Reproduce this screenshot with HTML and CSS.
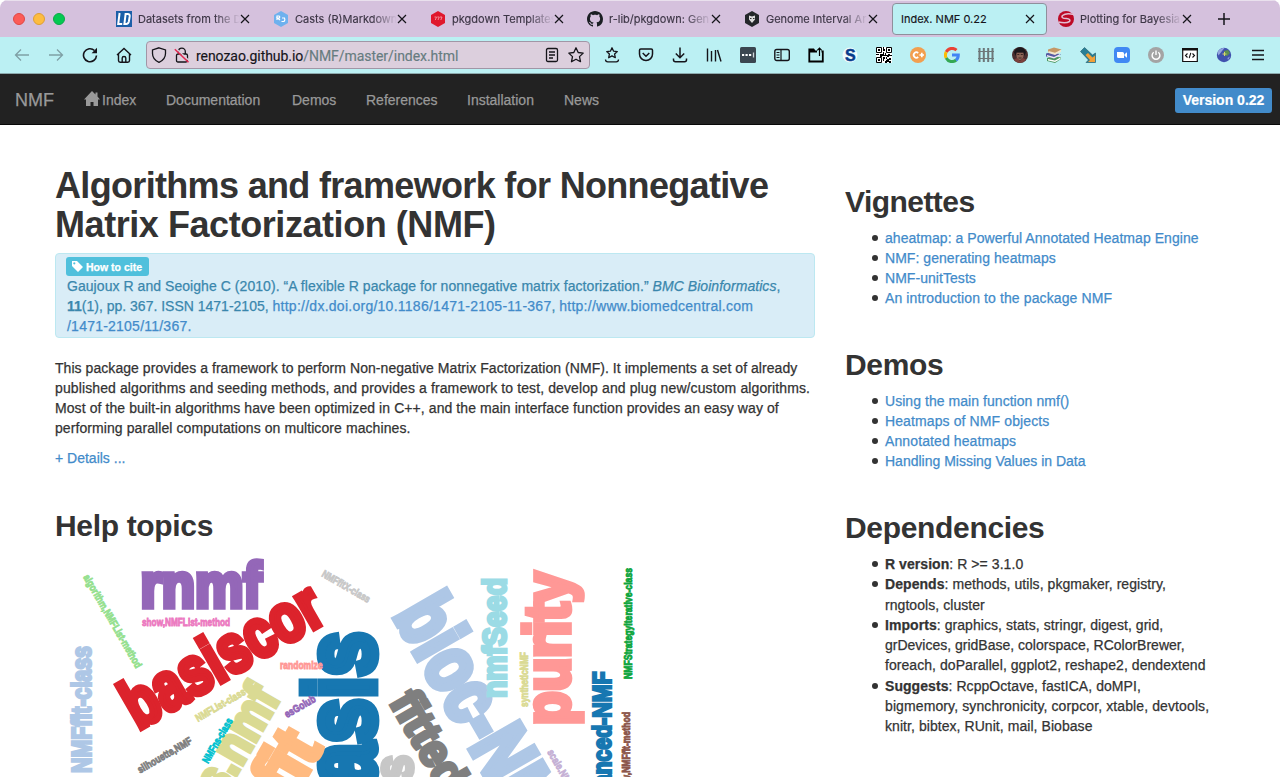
FILE: index.html
```html
<!DOCTYPE html>
<html lang="en">
<head>
<meta charset="utf-8">
<title>Index. NMF 0.22</title>
<link rel="stylesheet" href="styles.css">
</head>
<body>
<div class="window">
<header class="tabbar">
  <div class="lights"><i class="light red"></i><i class="light amber"></i><i class="light green"></i></div>
  <div class="tabs">
    <div class="tab"><svg class="fav" viewBox="0 0 16 16"><path fill="#1c5fa8" d="M0 0h16v16H0z"/><path fill="none" stroke="#fff" stroke-width="2" d="M3.6 2 2.2 13h4M9.6 3 8.4 13h1.8q2.2 0 2.7-2.600l.8-5q.3-2.400-2-2.400z"/></svg><span class="t">Datasets from the D</span><svg class="x" viewBox="0 0 10 10"><path d="M1 1l8 8M9 1l-8 8"/></svg></div>
    <div class="tab"><svg class="fav" viewBox="0 0 16 16"><path fill="#6eb1ee" d="M8 0l7 4v8l-7 4-7-4V4z"/><path fill="none" stroke="#fff" stroke-width="1.200" d="M4 9V5h2q1.500 1 0 2.200H4.500L7 9M9 7h2.500q1 2-.5 3.500H8.500"/></svg><span class="t">Casts (R)Markdown</span><svg class="x" viewBox="0 0 10 10"><path d="M1 1l8 8M9 1l-8 8"/></svg></div>
    <div class="tab"><svg class="fav" viewBox="0 0 16 16"><path fill="#e0182d" d="M8 0l7 4v8l-7 4-7-4V4z"/><path fill="none" stroke="#f7a8ae" stroke-width=".8" d="M4.500 6h2L5.300 9M7.300 6h2L8 9M10 6h2l-1.200 3"/></svg><span class="t">pkgdown Templates</span><svg class="x" viewBox="0 0 10 10"><path d="M1 1l8 8M9 1l-8 8"/></svg></div>
    <div class="tab"><svg class="fav" viewBox="0 0 16 16"><path fill="#1b1f23" d="M8 0C3.580 0 0 3.580 0 8c0 3.540 2.290 6.530 5.470 7.590.4.070.55-.17.55-.38 0-.19-.01-.82-.01-1.490-2.010.37-2.530-.49-2.690-.94-.09-.23-.48-.94-.82-1.130-.28-.15-.68-.52-.01-.53.63-.01 1.080.58 1.230.82.72 1.210 1.870.87 2.330.66.07-.52.28-.87.51-1.070-1.780-.2-3.640-.89-3.640-3.950 0-.87.31-1.590.82-2.150-.08-.2-.36-1.020.08-2.120 0 0 .67-.21 2.200.82.64-.18 1.320-.27 2-.27s1.360.09 2 .27c1.530-1.040 2.200-.82 2.200-.82.44 1.100.16 1.920.08 2.120.51.56.82 1.270.82 2.150 0 3.070-1.870 3.750-3.650 3.950.29.25.54.73.54 1.480 0 1.070-.01 1.930-.01 2.200 0 .21.15.46.55.38A8 8 0 0 0 16 8c0-4.420-3.580-8-8-8z"/></svg><span class="t">r-lib/pkgdown: Gen</span><svg class="x" viewBox="0 0 10 10"><path d="M1 1l8 8M9 1l-8 8"/></svg></div>
    <div class="tab"><svg class="fav" viewBox="0 0 16 16"><path fill="#24272a" d="M8 0l7 4v8l-7 4-7-4V4z"/><path fill="#ddd" d="M5 4.500l3 1 3-1v4L8 12 5 8.500z"/><path fill="#333" d="M6 7h1.500v1H6zM9 7h1.500v1H9z"/></svg><span class="t">Genome Interval Ar</span><svg class="x" viewBox="0 0 10 10"><path d="M1 1l8 8M9 1l-8 8"/></svg></div>
    <div class="tab active"><span class="t">Index. NMF 0.22</span><svg class="x" viewBox="0 0 10 10"><path d="M1 1l8 8M9 1l-8 8"/></svg></div>
    <div class="tab"><svg class="fav" viewBox="0 0 16 16"><circle cx="8" cy="8" r="8" fill="#bd0a26"/><path fill="none" stroke="#e3bfd3" stroke-width="1.500" d="M16 3.500Q8 1.500 4.500 4.500 2.500 7.500 8.500 7.500q4.500.5 3 3Q8 12.800.5 11"/></svg><span class="t">Plotting for Bayesia</span><svg class="x" viewBox="0 0 10 10"><path d="M1 1l8 8M9 1l-8 8"/></svg></div>
  </div>
  <svg class="plus" viewBox="0 0 12 12"><path d="M6 0v12M0 6h12"/></svg>
</header>

<div class="toolbar">
  <div class="navbtns">
    <svg class="ic dim" viewBox="0 0 16 16"><path d="M15 8H1.500M7 2.500 1.500 8 7 13.500"/></svg>
    <svg class="ic dim" viewBox="0 0 16 16"><path d="M1 8h13.500M9 2.500 14.500 8 9 13.500"/></svg>
    <svg class="ic" viewBox="0 0 16 16"><path stroke-width="1.600" d="M14.500 8.500A6.500 6.500 0 1 1 12.500 3.500"/><path fill="#15141a" stroke="none" d="M15 .8v5.400H9.600z"/></svg>
    <svg class="ic" viewBox="0 0 16 16"><path stroke-width="1.400" d="M1 8 8 1.500 15 8M2.500 7v6.500q0 1.700 1.700 1.700h7.600q1.700 0 1.700-1.700V7M6.200 15v-4q0-1.500 1.800-1.500T9.800 11v4"/></svg>
  </div>
  <div class="urlbar">
    <svg class="ic" viewBox="0 0 16 16"><path d="M8 .8 14.500 3V6.500Q14.500 12.500 8 15.300 1.500 12.500 1.500 6.500V3z"/></svg>
    <svg class="ic lock" viewBox="0 0 16 16"><path d="M4.500 7V4.500a3.300 3.300 0 0 1 6.800 0V7M4 7h8q1.500 0 1.500 1.500v5q0 1.500-1.500 1.500H4q-1.500 0-1.500-1.500v-5Q2.500 7 4 7z"/><path stroke="#dccfdd" stroke-width="1.500" d="M2 1.500l13 12"/><path stroke="#e22850" stroke-width="1.500" d="M.8 2.200l13.700 13"/></svg>
    <span class="url">renozao.github.io<em>/NMF/master/index.html</em></span>
    <svg class="ic reader" viewBox="0 0 16 16"><path d="M4 1.500h8q1.500 0 1.500 1.500v10q0 1.500-1.500 1.500H4q-1.500 0-1.500-1.500V3q0-1.500 1.500-1.500zM5 5h6M5 8h6M5 11h4"/></svg>
    <svg class="ic" viewBox="0 0 16 16"><path stroke-linejoin="round" d="M8 .8l2.200 4.700 5 .6-3.700 3.500 1 5.100L8 12.200l-4.500 2.500 1-5.100L.8 6.100l5-.6z"/></svg>
  </div>
  <div class="ext">
    <svg class="ic" viewBox="0 0 16 16"><path stroke-linejoin="round" d="M8 .8l1.600 3.400 3.700.4-2.700 2.500.7 3.600L8 8.900l-3.300 1.800.7-3.600L2.700 4.600l3.700-.4zM1.500 12.500q0 2.300 2.300 2.300h8.400q2.300 0 2.300-2.300"/></svg>
    <svg class="ic" viewBox="0 0 16 16"><path stroke-width="1.500" d="M2.800 2h10.400q1.300 0 1.300 1.300V7a6.500 6.500 0 0 1-13 0V3.300Q1.500 2 2.800 2zM4.700 6 8 9.200 11.300 6"/></svg>
    <svg class="ic" viewBox="0 0 16 16"><path stroke-width="1.500" d="M8 .5v10M3.800 6.500 8 10.700l4.200-4.200M1.500 11.500v1.300q0 2 2 2h9q2 0 2-2v-1.300"/></svg>
    <svg class="ic" viewBox="0 0 16 16"><path stroke-width="1.400" d="M1.500 1.500v13M5.500 4v10.500M9.500 3v11.500M11.500 3l3.500 11.500"/></svg>
    <svg class="ic" viewBox="0 0 16 16"><rect width="16" height="16" rx="1.500" fill="#3b4650" stroke="none"/><path stroke="#fff" stroke-width="2.200" stroke-dasharray="2.200 1.300" d="M2 8h10"/><path stroke="#cfd4d8" d="M13.500 5.500v5"/></svg>
    <svg class="ic" viewBox="0 0 16 16"><rect x=".8" y="2.500" width="14.500" height="11" rx="2" stroke-width="1.400"/><path stroke-width="1.200" d="M7 2.500v11M2.500 5.500h3M2.500 8h3M2.500 10.500h3"/></svg>
    <svg class="ic" viewBox="0 0 16 16"><path stroke-width="1.800" stroke="#000" d="M9 4.500H7L5.500 2.500H1.300v12h13.500V4.500H13.500M1.300 4.500h7"/><path stroke="#000" stroke-width="1.200" d="M11.500 9V1M9.300 3.300 11.500 1l2.200 2.300"/></svg>
    <svg class="ic" viewBox="0 0 16 16"><circle cx="8" cy="8" r="7.500" fill="#fff" opacity=".75" stroke="none"/><text x="3" y="13.500" class="logo-s">S</text></svg>
    <svg class="ic qr" viewBox="0 0 16 16"><path fill="#fff" stroke="none" d="M0 0h16v16H0z"/><path stroke="#000" stroke-width="1" d="M.5.5h5v5h-5zM10.500.5h5v5h-5zM.5 10.500h5v5h-5z"/><path fill="#000" stroke="none" d="M2 2h2v2H2zM12 2h2v2h-2zM2 12h2v2H2zM7 0h1v2h1v2H7zM0 7h3v1H0zM4 7h3V5h1v4H6v1H4zM9 6h1v2h2V7h2v1h2v1h-3v1h-2V9H8V8h1zM7 10h2v2H8v2H7zM10 10h1v2h2v-1h2v2h-2v1h2v2h-2v-1h-2v1H9v-2h1v-1h1v-1h-1z"/></svg>
    <svg class="ic" viewBox="0 0 16 16"><circle cx="8" cy="8" r="8" fill="#f29f4f" stroke="none"/><path stroke="#fff" stroke-width="1.700" d="M8.200 6A2.700 2.700 0 1 0 8.200 10M9.500 8h4.500M11.800 5.800v4.400"/></svg>
    <svg class="ic" viewBox="0 0 16 16"><g stroke-width="3"><path stroke="#ea4335" d="M2.200 5A6.500 6.500 0 0 1 12.500 3.200"/><path stroke="#fbbc05" d="M2.200 5a6.500 6.500 0 0 0 0 6"/><path stroke="#34a853" d="M2.200 11a6.500 6.500 0 0 0 10 2"/><path stroke="#4285f4" d="M8 8h6.300q0 3.500-2.300 5.200"/></g></svg>
    <svg class="ic" viewBox="0 0 16 16"><path stroke="#6d7779" stroke-width="2" d="M1.500 1v14M5.800 1v14M10.200 1v14M14.500 1v14"/><path stroke="#6d7779" stroke-width="1" d="M0 4.500h16M0 11.500h16"/></svg>
    <svg class="ic" viewBox="0 0 16 16"><circle cx="8" cy="8" r="8" fill="#4a2f30" stroke="none"/><path fill="#8c6456" stroke="none" d="M4.500 5.500h7V9Q11 12.500 8 13T4.500 9z"/><path fill="#1b181c" stroke="none" d="M2 5Q4 .3 8 .3T14 5l-1.500 4-1-3.500h-7L3.500 9z"/><path stroke="#33211f" stroke-width=".9" d="M5.300 7.500h2M8.800 7.500h2M6.500 11h3"/><path fill="#7c413c" stroke="none" d="M2 12.500l3-1.500 3 3 3-3 3 1.500A8 8 0 0 1 8 16a8 8 0 0 1-6-3.500z"/></svg>
    <svg class="ic" viewBox="0 0 16 16"><g stroke="none"><path fill="#4d9860" d="M1 11l6-2 8 1.500V12l-6 4-8-2z"/><path fill="#fff" d="M2 12l7 1.500 5.500-3V12L9 15l-7-1.500z"/><path fill="#565aa2" d="M0 6.500 6 5l9 2.500-7 4-8-2z"/><path fill="#efeaf3" d="M1 8l7 2 6-3v1.500l-6 3-7-2z"/><path fill="#c59866" d="M2 2.500 8 .5l7.500 2-6 4L2 5z"/><path fill="#f2e6cd" d="M2.500 4 9 5.700l6-3v2L9 8 2.500 6z"/></g></svg>
    <svg class="ic" viewBox="0 0 16 16"><path fill="#287f95" stroke="#20586a" stroke-width=".6" d="M.5 4.500 4.500.5l8 7.500 3-2v9.500H6L8.500 13z"/><path fill="#f2a038" stroke="none" d="M5.500 8 8 6l4.500 4.500 2.500-2V15H8l2-2z"/></svg>
    <svg class="ic" viewBox="0 0 16 16"><rect width="16" height="16" rx="4" fill="#4189f3" stroke="none"/><path fill="#fff" stroke="none" d="M3 5h5.500q1.500 0 1.500 1.500V11H4.500Q3 11 3 9.500zM10.500 7.200 13 5.200v5.600l-2.500-2z"/></svg>
    <svg class="ic" viewBox="0 0 16 16"><circle cx="8" cy="8" r="8" fill="#a4a4a4" stroke="none"/><path stroke="#fff" stroke-width="1.400" d="M5.700 5.200a3.900 3.900 0 1 0 4.600 0M8 3.500V8"/></svg>
    <svg class="ic" viewBox="0 0 16 16"><path fill="#fff" stroke="#111" stroke-width="1.200" d="M.7 1.500h14.600v13H.7z"/><path fill="#111" stroke="none" d="M0 1h16v2.500H0z"/><path stroke="#111" stroke-width="1.100" d="M5.500 6.500 3.500 8.500l2 2M10.500 6.500l2 2-2 2M8.800 5.800 7.200 11.200"/></svg>
    <svg class="ic" viewBox="0 0 16 16"><circle cx="8" cy="8" r="7.200" fill="#4052ae" stroke="none"/><path fill="#95a6df" stroke="none" d="M1.500 5.500q2.500-5 7-4.500L6 4 2.500 8.500zM11.500 11l2.500-1.500-2 3.500z"/><path fill="#5c8f52" stroke="none" d="M8 4l4-1 2 3-3 3-3-1z"/><path stroke="#d8d870" stroke-width="1" d="M8.500 5v4M6.500 7h4"/></svg>
    <svg class="ic" viewBox="0 0 16 16"><path stroke-width="1.500" d="M2 3.500h12M2 8h12M2 12.500h12"/></svg>
  </div>
</div>

<nav class="navbar">
  <a class="brand">NMF</a>
  <a class="n1"><svg class="home" viewBox="0 0 16 15"><path d="M8 0l3.500 3.500V1.500h2V5.500L16 8.500h-2V15H9.500v-4h-3v4H2V8.500H0z"/></svg>Index</a>
  <a class="n2">Documentation</a><a class="n3">Demos</a><a class="n4">References</a><a class="n5">Installation</a><a class="n6">News</a>
  <span class="version">Version 0.22</span>
</nav>

<div class="container">
  <main>
    <h1>Algorithms and framework for Nonnegative<br><span class="second">Matrix Factorization (NMF)</span></h1>
    <div class="alert">
      <span class="label"><svg class="tag" viewBox="0 0 11 11"><path fill-rule="evenodd" d="M0 0h5l6 6-5 5-6-6zM2.300 1.200a1.100 1.100 0 1 0 .01 0z"/></svg>How to cite</span>
      <p class="s1">Gaujoux R and Seoighe C (2010). “A flexible R package for nonnegative matrix factorization.” <i>BMC Bioinformatics</i>,</p>
      <p><b>11</b>(1), pp. 367. ISSN 1471-2105, <a class="s5">http://dx.doi.org/10.1186/1471-2105-11-367</a>, <a class="s5">http://www.biomedcentral.com</a></p>
      <p class="s4"><a>/1471-2105/11/367.</a></p>
    </div>
    <p class="about"><span class="s1">This package provides a framework to perform Non-negative Matrix Factorization (NMF). It implements a set of already</span><br><span class="s3">published algorithms and seeding methods, and provides a framework to test, develop and plug new/custom algorithms.</span><br><span class="s2">Most of the built-in algorithms have been optimized in C++, and the main interface function provides an easy way of</span><br><span class="s2">performing parallel computations on multicore machines.</span></p>
    <p class="details"><a>+ Details ...</a></p>
    <h2>Help topics</h2>
    <svg class="cloud" viewBox="55 550 600 227" width="600" height="227">
      <g>
        <text transform="translate(140.500 606.500)" font-size="63" textLength="121" lengthAdjust="spacingAndGlyphs" class="purple">rnmf</text>
        <text transform="translate(138 730) rotate(-30)" font-size="68" textLength="220" lengthAdjust="spacingAndGlyphs" class="red">basiscor</text>
        <text transform="translate(374 836) rotate(-90)" font-size="98" textLength="204" lengthAdjust="spacingAndGlyphs" class="blue">basis</text>
        <text transform="translate(393 615) rotate(60)" font-size="80" textLength="288" lengthAdjust="spacingAndGlyphs" class="sky">bioc-NMF</text>
        <text transform="translate(568.500 725) rotate(-90)" font-size="63" textLength="153" lengthAdjust="spacingAndGlyphs" class="pink">purity</text>
        <text transform="translate(179 874) rotate(-60)" font-size="52" textLength="203" lengthAdjust="spacingAndGlyphs" class="khaki">basis.nmf</text>
        <text transform="translate(291 802) rotate(-60)" font-size="70" textLength="63" lengthAdjust="spacingAndGlyphs" class="orange">fit</text>
        <text transform="translate(389 702) rotate(60)" font-size="46" textLength="105" lengthAdjust="spacingAndGlyphs" class="grey">fitted</text>
        <text transform="translate(505.500 698) rotate(-90)" font-size="33" textLength="120" lengthAdjust="spacingAndGlyphs" class="cyan">nmfSeed</text>
        <text transform="translate(91 773) rotate(-90)" font-size="27" textLength="127" lengthAdjust="spacingAndGlyphs" class="sky">NMFfit-class</text>
        <text transform="translate(611 823) rotate(-90)" font-size="26" textLength="151.500" lengthAdjust="spacingAndGlyphs" class="blue">advanced-NMF</text>
        <text transform="translate(412 781) rotate(-90)" font-size="55" textLength="26" lengthAdjust="spacingAndGlyphs" class="silver">s</text>
      </g>
      <g class="small" font-size="10.500">
        <text transform="translate(142 626)" textLength="88" lengthAdjust="spacingAndGlyphs" class="magenta">show,NMFList-method</text>
        <text transform="translate(83 577) rotate(60)" textLength="106" lengthAdjust="spacingAndGlyphs" class="lime">algorithm,NMFList-method</text>
        <text transform="translate(321 576) rotate(30)" textLength="54" lengthAdjust="spacingAndGlyphs" class="silver">NMFfitX-class</text>
        <text transform="translate(280 668.500)" textLength="42.500" lengthAdjust="spacingAndGlyphs" class="pink">randomize</text>
        <text transform="translate(198 722) rotate(-30)" textLength="56" lengthAdjust="spacingAndGlyphs" class="khaki">NMFList-class</text>
        <text transform="translate(208 764) rotate(-60)" textLength="50" lengthAdjust="spacingAndGlyphs" class="teal">NMFns-class</text>
        <text transform="translate(140 773.500) rotate(-30)" textLength="61" lengthAdjust="spacingAndGlyphs" class="grey">silhouette,NMF</text>
        <text transform="translate(287 718) rotate(-30)" textLength="34" lengthAdjust="spacingAndGlyphs" class="purple">esGolub</text>
        <text transform="translate(528 707) rotate(-90)" textLength="55" lengthAdjust="spacingAndGlyphs" class="khaki">syntheticNMF</text>
        <text transform="translate(632 679) rotate(-90)" textLength="111" lengthAdjust="spacingAndGlyphs" class="green">NMFStrategyIterative-class</text>
        <text transform="translate(630 797) rotate(-90)" textLength="85" lengthAdjust="spacingAndGlyphs" class="brown">show,NMFfit-method</text>
        <text transform="translate(547 752) rotate(60)" textLength="42" lengthAdjust="spacingAndGlyphs" class="lilac">scale.NMF</text>
      </g>
    </svg>
  </main>
  <aside>
    <h2 class="tight">Vignettes</h2>
    <ul>
      <li><a>aheatmap: a Powerful Annotated Heatmap Engine</a></li>
      <li><a>NMF: generating heatmaps</a></li>
      <li><a>NMF-unitTests</a></li>
      <li><a class="s3">An introduction to the package NMF</a></li>
    </ul>
    <h2>Demos</h2>
    <ul>
      <li><a>Using the main function nmf()</a></li>
      <li><a class="s3">Heatmaps of NMF objects</a></li>
      <li><a class="s3">Annotated heatmaps</a></li>
      <li><a class="s0">Handling Missing Values in Data</a></li>
    </ul>
    <h2>Dependencies</h2>
    <ul class="deps">
      <li><b>R version</b>: R &gt;= 3.1.0</li>
      <li><b>Depends</b>: methods, utils, pkgmaker, registry,<br>rngtools, cluster</li>
      <li><b>Imports</b>: graphics, stats, stringr, digest, grid,<br><span class="s0">grDevices, gridBase, colorspace, RColorBrewer,</span><br>foreach, doParallel, ggplot2, reshape2, dendextend</li>
      <li><b>Suggests</b>: RcppOctave, fastICA, doMPI,<br><span class="s3">bigmemory, synchronicity, corpcor, xtable, devtools,</span><br>knitr, bibtex, RUnit, mail, Biobase</li>
    </ul>
  </aside>
</div>
</div>
</body>
</html>
```
FILE: styles.css
```css
* { box-sizing: border-box; }
html, body { margin: 0; height: 777px; overflow: hidden; background: #fff; }
body { font: 14px/20px "Liberation Sans", Arial, sans-serif; color: #333; }
.window { height: 777px; overflow: hidden; border-radius: 8px 8px 0 0; }
svg { display: block; flex: none; }
a { color: #428bca; }

.tabbar { display: flex; align-items: center; height: 37px; background: #d5c1dd; border-top: 1px solid #e9e0ed; }
.lights { display: flex; gap: 8px; width: 106px; padding-left: 13px; }
.light { width: 12px; height: 12px; border-radius: 50%; }
.light.red { background: #fc5b57; border: 1px solid #df4744; }
.light.amber { background: #fdbc40; border: 1px solid #de9f34; }
.light.green { background: #04c951; border: 1px solid #0ba947; }
.tabs { display: flex; }
.tab { display: flex; align-items: center; width: 157px; height: 32px; padding: 0 13px 0 10px; }
.fav { width: 16px; height: 16px; margin-right: 6px; }
.t { flex: 1; overflow: hidden; white-space: nowrap; font: 11px/16px Inter, sans-serif; color: #3d3646; -webkit-text-stroke: .15px; -webkit-mask-image: linear-gradient(to right, #000 75%, transparent 100%); mask-image: linear-gradient(to right, #000 75%, transparent 100%); }
.x { width: 10px; height: 10px; }
.x path { fill: none; stroke: #15141a; stroke-width: 1.2; }
.active { width: 155px; margin: 0 1px; padding: 0 11px 0 8px; background: #bbf0f3; border: 1px solid #8f8f9b; border-radius: 4px; }
.active .t { color: #15141a; -webkit-mask-image: none; mask-image: none; }
.plus { width: 12px; height: 12px; margin-left: 13px; }
.plus path { fill: none; stroke: #15141a; stroke-width: 1.5; }

.toolbar { display: flex; align-items: center; height: 37px; background: #bbf0f3; border-bottom: 1px solid #8ba9ad; }
.ic { width: 16px; height: 16px; fill: none; stroke: #15141a; stroke-width: 1.3; }
.dim { stroke: #7fa0a5; stroke-width: 1.3; }
.navbtns { display: flex; gap: 18px; width: 146px; padding-left: 14px; }
.urlbar { display: flex; align-items: center; width: 444px; height: 28px; padding: 0 5px 0 4px; background: #dccfdd; border: 1px solid #a196a6; border-radius: 4px; }
.lock { margin-left: 7px; }
.url { flex: 1; padding: 2px 0 0 6px; font: 14px/20px Roboto, sans-serif; letter-spacing: -.05px; color: #15141a; white-space: nowrap; -webkit-text-stroke: .15px; }
.url em { font-style: normal; color: #667c80; }
.reader { margin-right: 8px; }
.ext { display: flex; gap: 18px; padding-left: 14px; }
.logo-s { font: bold 16px "Liberation Sans", sans-serif; fill: #083c8c; stroke: #083c8c; stroke-width: .5px; }

.navbar { display: flex; align-items: center; height: 51px; padding: 2px 8px 0 15px; background: #222; border-bottom: 1px solid #080808; }
.navbar a { color: #999; white-space: nowrap; -webkit-text-stroke: .25px #999; }
.navbar .brand { width: 69px; font-size: 18px; }
.navbar .n1 { display: flex; width: 82px; }
.n2 { width: 126px; }
.n3 { width: 74px; }
.n4 { width: 101px; }
.n5 { width: 97px; }
.home { width: 16px; height: 15px; margin: 1px 2px 0 0; fill: #999; }
.version { width: 97px; margin-left: auto; border-radius: 3px; background: #428bca; color: #fff; font-weight: bold; line-height: 25px; text-align: center; -webkit-text-stroke: .2px; }

.container { display: flex; gap: 30px; padding-left: 55px; white-space: nowrap; -webkit-text-stroke: .25px; }
main { width: 760px; padding-top: 41px; }
aside { width: 380px; padding-top: 60px; }
h1, h2, p, ul { margin: 0; }
h1, h2 { font-weight: bold; -webkit-text-stroke: 0; }
h1 { font-size: 36px; line-height: 39px; letter-spacing: -.67px; }
.second { letter-spacing: -.44px; }
h2 { font-size: 30px; line-height: 33px; letter-spacing: -.33px; }
h2.tight { letter-spacing: -.55px; }
.s0 { letter-spacing: 0; }
.s1 { letter-spacing: .054px; }
.s2 { letter-spacing: .082px; }
.s3 { letter-spacing: .11px; }
.s4 { letter-spacing: .23px; }
.s5 { letter-spacing: .26px; }
.alert { height: 85px; margin-top: 9px; padding: 3px 10px; border: 1px solid #bce8f1; border-radius: 4px; background: #d9edf7; color: #3a87ad; }
.alert p { padding-left: 1px; }
.label { display: flex; align-items: center; gap: 3px; width: 83px; height: 19px; padding-left: 6px; border-radius: 3px; background: #50c0dc; color: #fff; font-size: 10.5px; font-weight: bold; }
.tag { width: 11px; height: 11px; fill: #fff; }
.about { margin-top: 20px; }
.details { margin-top: 10px; }
main h2 { margin-top: 41px; }
.cloud { margin-top: 8px; }
ul { padding-left: 40px; margin: 10px 0 40px; list-style: none; letter-spacing: .05px; }
li { position: relative; }
li::before { content: ""; position: absolute; left: -13px; top: 7px; width: 6px; height: 6px; border-radius: 50%; background: #333; }
.deps { line-height: 20.25px; letter-spacing: .06px; }

.cloud text { font-family: "Liberation Sans", Arial, sans-serif; font-weight: bold; fill: currentColor; stroke: currentColor; stroke-width: .09em; stroke-miterlimit: 2; }
.cloud .small text { stroke-width: .08em; }
.cloud .purple { color: #9467b8; }
.cloud .red { color: #dc232c; }
.cloud .blue { color: #1777b1; }
.cloud .sky { color: #aec7e6; }
.cloud .pink { color: #ff9896; }
.cloud .khaki { color: #dada93; }
.cloud .orange { color: #ffba80; }
.cloud .grey { color: #7f7f7f; }
.cloud .cyan { color: #9bdbe5; }
.cloud .silver { color: #c7c7c7; }
.cloud .magenta { color: #ec79c0; }
.cloud .lime { color: #94e08e; }
.cloud .teal { color: #00c1cf; }
.cloud .green { color: #0fa53e; }
.cloud .brown { color: #8c564b; }
.cloud .lilac { color: #c5b0d5; }
```
